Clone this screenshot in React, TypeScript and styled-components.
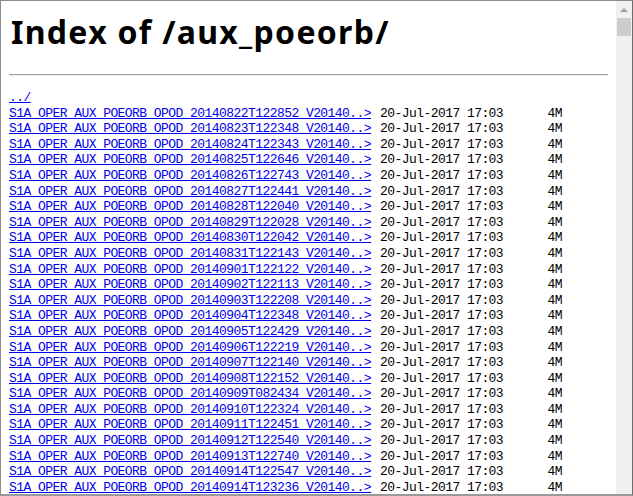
import React from "react";
import styled, { createGlobalStyle } from "styled-components";

const Global = createGlobalStyle`
  html, body { margin: 0; padding: 0; background: #fff; overflow: hidden; }
  #root { width: 633px; height: 496px; }
`;

const Frame = styled.div`
  box-sizing: border-box;
  width: 633px;
  height: 496px;
  display: flex;
  border: 1px solid #8c8c8c;
  border-right-color: #6e6e6e;
  border-bottom: 2px solid #9a9a9a;
  background: #fff;
  overflow: hidden;
`;

const Viewport = styled.div`
  flex: 1;
  min-width: 0;
  padding: 8px;
  overflow: hidden;
`;

const Scrollbar = styled.div`
  width: 16px;
  flex: none;
  background: #f0f0f0;
  display: flex;
  flex-direction: column;
  align-items: center;
`;

const ArrowUp = styled.div`
  width: 0;
  height: 0;
  margin-top: 7px;
  border-left: 4px solid transparent;
  border-right: 4px solid transparent;
  border-bottom: 4px solid #a3a3a3;
`;

const Thumb = styled.div`
  margin-top: 6px;
  width: 14px;
  height: 18px;
  background: #cdcdcd;
`;

const Title = styled.h1`
  margin: 3px 0 0 2px;
  font-family: "Noto Sans", "Open Sans", sans-serif;
  font-weight: 700;
  font-size: 32px;
  letter-spacing: 1.3px;
  line-height: 40px;
  color: #000;
`;

const Rule = styled.hr`
  margin: 22px 0 0 0;
  border: none;
  border-top: 1px solid #a0a0a0;
  border-bottom: 1px solid #eeeeee;
`;

const Listing = styled.div`
  margin-top: 14px;
  font-family: "Liberation Mono", "DejaVu Sans Mono", monospace;
  font-size: 13px;
  letter-spacing: -0.56px;
  line-height: 15.6px;
  color: #000;
`;

const Row = styled.div`
  display: grid;
  grid-template-columns: 371px 122px 60px;
  white-space: pre;
`;

const FileLink = styled.a`
  color: #0000ee;
  text-decoration: underline;
  text-underline-offset: 1px;
`;

const Cell = styled.span<{ $right?: boolean }>`
  text-align: ${(p) => (p.$right ? "right" : "left")};
`;

const stamps = [
  "20140822T122852",
  "20140823T122348",
  "20140824T122343",
  "20140825T122646",
  "20140826T122743",
  "20140827T122441",
  "20140828T122040",
  "20140829T122028",
  "20140830T122042",
  "20140831T122143",
  "20140901T122122",
  "20140902T122113",
  "20140903T122208",
  "20140904T122348",
  "20140905T122429",
  "20140906T122219",
  "20140907T122140",
  "20140908T122152",
  "20140909T082434",
  "20140910T122324",
  "20140911T122451",
  "20140912T122540",
  "20140913T122740",
  "20140914T122547",
  "20140914T123236",
];

export default function App() {
  return (
    <>
      <Global />
      <Frame>
        <Viewport>
          <Title>Index of /aux_poeorb/</Title>
          <Rule />
          <Listing>
            <Row>
              <FileLink href="#">../</FileLink>
            </Row>
            {stamps.map((s) => (
              <Row key={s}>
                <Cell>
                  <FileLink href="#">{`S1A_OPER_AUX_POEORB_OPOD_${s}_V20140..>`}</FileLink>
                </Cell>
                <Cell>20-Jul-2017 17:03</Cell>
                <Cell $right>4M</Cell>
              </Row>
            ))}
          </Listing>
        </Viewport>
        <Scrollbar>
          <ArrowUp />
          <Thumb />
        </Scrollbar>
      </Frame>
    </>
  );
}
